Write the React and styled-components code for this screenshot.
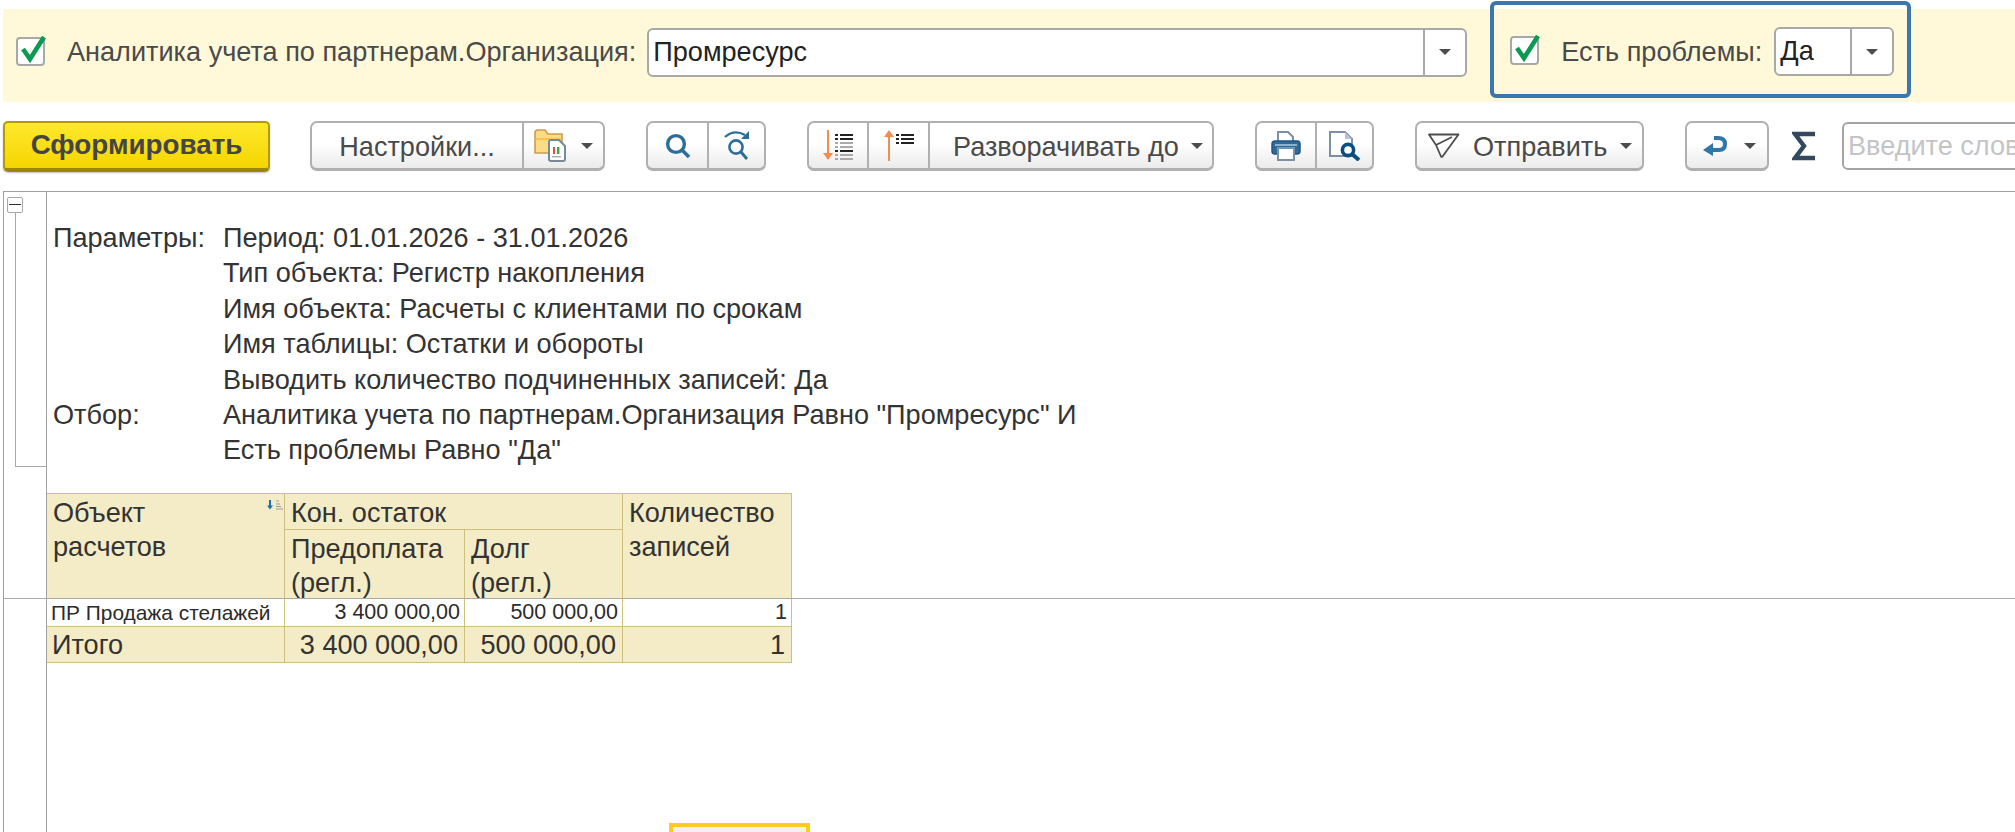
import React from "react";
import styled, { createGlobalStyle } from "styled-components";

const GlobalStyle = createGlobalStyle`
  html, body {
    margin: 0;
    padding: 0;
    background: #ffffff;
    overflow: hidden;
  }
  * {
    box-sizing: border-box;
  }
`;

const Check = () => (
  <CheckSvg viewBox="0 0 30 32">
    <path d="M5 15 L12 25 L26 3" fill="none" stroke="#0b9a50" strokeWidth="4.6" strokeLinejoin="miter" />
  </CheckSvg>
);

const FolderIcon = () => (
  <svg width="32" height="33" viewBox="0 0 32 33">
    <path d="M1 8 L1 4 Q1 1 4 1 L11 1 L14 5 L28 5 L28 24 L1 24 Z" fill="#fbdc85" stroke="#cf9a4d" strokeWidth="1.6" />
    <rect x="1.5" y="9" width="26" height="2" fill="#f2c160" />
    <path d="M15 13 Q15 11 17 11 L25 11 L31 17 L31 30 Q31 32 29 32 L17 32 Q15 32 15 30 Z" fill="#ffffff" stroke="#76899a" strokeWidth="2" />
    <rect x="19" y="18" width="2" height="7" fill="#e0503c" />
    <rect x="23" y="18" width="2.4" height="7" fill="#38a84e" />
    <rect x="18" y="27" width="9" height="1.4" fill="#a9a9a9" />
  </svg>
);

const SearchIcon = () => (
  <svg width="26" height="26" viewBox="0 0 26 26">
    <circle cx="11" cy="11" r="8.4" fill="none" stroke="#2c6e99" strokeWidth="3.4" />
    <path d="M17 17 L24 24" stroke="#2c6e99" strokeWidth="3.6" />
  </svg>
);

const SearchAgainIcon = () => (
  <svg width="26" height="32" viewBox="0 0 26 32">
    <circle cx="12" cy="17" r="6.6" fill="none" stroke="#2c6e99" strokeWidth="2.6" />
    <path d="M17 22 L23 29" stroke="#2c6e99" strokeWidth="3" />
    <path d="M1 7 Q10 -1 21 5" fill="none" stroke="#2c6e99" strokeWidth="2.2" />
    <path d="M25 1 L25 9 L17 9 Z" fill="#2c6e99" />
  </svg>
);

const ListBars = ({ rows }) => (
  <g>
    {rows.map((r) => (
      <g key={r.y} fill={r.color}>
        <rect x="0" y={r.y} width="3" height="2" />
        <rect x="5" y={r.y} width="13" height="2" />
      </g>
    ))}
  </g>
);

const SortDownIcon = () => (
  <svg width="30" height="32" viewBox="0 0 30 32">
    <path d="M5 0 L5 24" stroke="#f58b4e" strokeWidth="2" />
    <path d="M0 23 L10 23 L5 30 Z" fill="#f58b4e" />
    <g transform="translate(12 4)">
      <ListBars
        rows={[
          { y: 0, color: "#222" },
          { y: 4, color: "#222" },
          { y: 8, color: "#aaa" },
          { y: 12, color: "#aaa" },
          { y: 16, color: "#222" },
          { y: 20, color: "#aaa" },
          { y: 24, color: "#aaa" },
        ]}
      />
    </g>
  </svg>
);

const SortUpIcon = () => (
  <svg width="30" height="32" viewBox="0 0 30 32">
    <path d="M5 6 L5 31" stroke="#f58b4e" strokeWidth="2" />
    <path d="M0 7 L10 7 L5 0 Z" fill="#f58b4e" />
    <g transform="translate(12 4)">
      <ListBars
        rows={[
          { y: 0, color: "#222" },
          { y: 4, color: "#222" },
          { y: 8, color: "#222" },
        ]}
      />
    </g>
  </svg>
);

const PrintIcon = () => (
  <svg width="30" height="30" viewBox="0 0 30 30">
    <path d="M7 10 L7 1 L17 1 L22 6 L22 10" fill="#ffffff" stroke="#7c90a6" strokeWidth="2" />
    <rect x="1" y="10" width="28" height="13" rx="3" fill="#2f6a98" stroke="#1f5584" strokeWidth="1.5" />
    <rect x="4" y="13" width="22" height="2" fill="#8fb2cc" />
    <rect x="7" y="17" width="16" height="12" fill="#ffffff" stroke="#7c90a6" strokeWidth="2" />
  </svg>
);

const PreviewIcon = () => (
  <svg width="32" height="30" viewBox="0 0 32 30">
    <path d="M1 1 L16 1 L23 8 L23 25 L1 25 Z" fill="#ffffff" stroke="#7c90a6" strokeWidth="2" />
    <path d="M16 1 L16 8 L23 8 Z" fill="#b9c4d0" />
    <circle cx="19" cy="19" r="5.6" fill="#ffffff" stroke="#0b4f80" strokeWidth="3.6" />
    <path d="M23 23 L30 29" stroke="#0b4f80" strokeWidth="4" />
  </svg>
);

const SendIcon = () => (
  <svg width="32" height="26" viewBox="0 0 32 26">
    <path
      d="M1 1.5 L30.5 1.5 L14.5 23.5 Q13.5 24.5 12.8 23 L8 12 Z M8 12 L24 4"
      fill="none"
      stroke="#4d4d4d"
      strokeWidth="1.8"
      strokeLinejoin="round"
    />
  </svg>
);

const ReturnIcon = () => (
  <svg width="26" height="22" viewBox="0 0 26 22">
    <path d="M0 15 L10 8 L10 21 Z" fill="#2f76a9" />
    <path d="M8 15 L16 15 Q22 15 22 9 Q22 3 15 3 L11 3" fill="none" stroke="#2f76a9" strokeWidth="4" />
  </svg>
);

const SigmaIcon = () => (
  <svg width="24" height="30" viewBox="0 0 24 30">
    <path d="M23 3 L3 3 L12 15 L3 27 L23 27" fill="none" stroke="#34495e" strokeWidth="4.4" />
  </svg>
);

const SortMark = () => (
  <SortMarkSvg viewBox="0 0 16 10">
    <path d="M3 0 L3 6" stroke="#1d6fb8" strokeWidth="2" />
    <path d="M0 5.5 L6 5.5 L3 9.5 Z" fill="#1d6fb8" />
    <path d="M9 1 L12 1 M9 4 L13 4 M9 6.5 L14 6.5 M9 9 L16 9" stroke="#999" strokeWidth="1" />
  </SortMarkSvg>
);

function App() {
  return (
    <Page>
      <GlobalStyle />

      <FilterBar>
        <FilterItem>
          <CheckBox>
            <Check />
          </CheckBox>
          <FilterLabel $space={11}>Аналитика учета по партнерам.Организация:</FilterLabel>
          <Select $width={820}>
            <SelectValue>Промресурс</SelectValue>
            <SelectArrow>
              <Caret />
            </SelectArrow>
          </Select>
        </FilterItem>
        <Highlight>
          <CheckBox>
            <Check />
          </CheckBox>
          <FilterLabel $space={12}>Есть проблемы:</FilterLabel>
          <Select $width={120}>
            <SelectValue>Да</SelectValue>
            <SelectArrow>
              <Caret />
            </SelectArrow>
          </Select>
        </Highlight>
      </FilterBar>

      <Toolbar>
        <PrimaryButton>Сформировать</PrimaryButton>

        <ButtonGroup>
          <ToolButton $width={210}>
            <ButtonText>Настройки...</ButtonText>
          </ToolButton>
          <ToolButton $width={81} $gap={15} $pad={10}>
            <FolderIcon />
            <Caret />
          </ToolButton>
        </ButtonGroup>

        <ButtonGroup>
          <ToolButton $width={59}>
            <SearchIcon />
          </ToolButton>
          <ToolButton $width={57}>
            <SearchAgainIcon />
          </ToolButton>
        </ButtonGroup>

        <ButtonGroup>
          <ToolButton $width={58}>
            <SortDownIcon />
          </ToolButton>
          <ToolButton $width={61}>
            <SortUpIcon />
          </ToolButton>
          <ToolButton $width={284} $gap={12} $pad={23}>
            <ButtonText>Разворачивать до</ButtonText>
            <Caret />
          </ToolButton>
        </ButtonGroup>

        <ButtonGroup>
          <ToolButton $width={58}>
            <PrintIcon />
          </ToolButton>
          <ToolButton $width={57}>
            <PreviewIcon />
          </ToolButton>
        </ButtonGroup>

        <ButtonGroup>
          <ToolButton $width={225} $gap={13} $pad={11}>
            <SendIcon />
            <ButtonText>Отправить</ButtonText>
            <Caret />
          </ToolButton>
        </ButtonGroup>

        <ButtonGroup>
          <ToolButton $width={80} $gap={15} $pad={16}>
            <ReturnIcon />
            <Caret />
          </ToolButton>
        </ButtonGroup>

        <SearchBox>
          <SigmaIcon />
          <SearchInput placeholder="Введите слово для поиска" readOnly />
        </SearchBox>
      </Toolbar>

      <Report>
        <HeadSection>
          <Gutter>
            <GroupToggle />
            <GroupLine />
          </Gutter>
          <HeadContent>
            <Params>
              <span>Параметры:</span>
              <span>Период: 01.01.2026 - 31.01.2026</span>
              <span />
              <span>Тип объекта: Регистр накопления</span>
              <span />
              <span>Имя объекта: Расчеты с клиентами по срокам</span>
              <span />
              <span>Имя таблицы: Остатки и обороты</span>
              <span />
              <span>Выводить количество подчиненных записей: Да</span>
              <span>Отбор:</span>
              <span>Аналитика учета по партнерам.Организация Равно "Промресурс" И</span>
              <span />
              <span>Есть проблемы Равно "Да"</span>
            </Params>
            <HeadGrid>
              <HeadCell $rows={2}>
                Объект
                <br />
                расчетов
                <SortMark />
              </HeadCell>
              <HeadCell $cols={2}>Кон. остаток</HeadCell>
              <HeadCell $rows={2}>
                Количество
                <br />
                записей
              </HeadCell>
              <HeadCell>
                Предоплата
                <br />
                (регл.)
              </HeadCell>
              <HeadCell>
                Долг
                <br />
                (регл.)
              </HeadCell>
            </HeadGrid>
          </HeadContent>
        </HeadSection>

        <BodySection>
          <Gutter />
          <div>
            <BodyGrid>
              <DataCell>ПР Продажа стелажей</DataCell>
              <DataCell $num>3 400 000,00</DataCell>
              <DataCell $num>500 000,00</DataCell>
              <DataCell $num>1</DataCell>
              <TotalCell>Итого</TotalCell>
              <TotalCell $num>3 400 000,00</TotalCell>
              <TotalCell $num>500 000,00</TotalCell>
              <TotalCell $num>1</TotalCell>
            </BodyGrid>
            <CurrentFrame>
              <CurrentInner />
            </CurrentFrame>
          </div>
        </BodySection>
      </Report>
    </Page>
  );
}

const Page = styled.div`
  width: 2015px;
  height: 832px;
  overflow: hidden;
  font-family: "Liberation Sans", Arial, sans-serif;
  font-size: 27.1px;
  color: #333333;
`;

// Filter bar
const FilterBar = styled.div`
  display: flex;
  align-items: flex-start;
  height: 93px;
  margin: 9px 0 0 3px;
  padding-left: 13px;
  background: #fff9d9;
`;

const FilterItem = styled.div`
  display: flex;
  align-items: center;
  height: 86px;
`;

const Highlight = styled.div`
  display: flex;
  align-items: center;
  height: 97px;
  margin: -8px 0 0 23px;
  padding: 4px 13px 0 16px;
  border: 4px solid #3a76af;
  border-radius: 6px;
`;

const CheckBox = styled.div`
  position: relative;
  flex: none;
  width: 29px;
  height: 29px;
  margin: -2px 22px 0 0;
  background: #ffffff;
  border: 2px solid #a8a8a8;
  border-radius: 4px;
`;

const CheckSvg = styled.svg`
  position: absolute;
  left: 0;
  top: -5px;
  width: 30px;
  height: 32px;
`;

const FilterLabel = styled.span`
  margin-right: ${(p) => p.$space}px;
  white-space: nowrap;
  color: #4a4a4a;
`;

const Select = styled.div`
  display: flex;
  width: ${(p) => p.$width}px;
  height: 49px;
  background: #ffffff;
  border: 2px solid #a8a8a8;
  border-radius: 6px;
`;

const SelectValue = styled.div`
  flex: 1;
  padding-left: 4px;
  line-height: 44px;
  color: #222222;
`;

const SelectArrow = styled.div`
  display: flex;
  align-items: center;
  justify-content: center;
  width: 42px;
  border-left: 2px solid #a8a8a8;
`;

const Caret = styled.span`
  flex: none;
  width: 0;
  height: 0;
  border-left: 6px solid transparent;
  border-right: 6px solid transparent;
  border-top: 6px solid #4d4d4d;
`;

// Toolbar
const Toolbar = styled.div`
  display: flex;
  align-items: flex-start;
  gap: 41px;
  height: 51px;
  margin: 19px 0 0 3px;
`;

const PrimaryButton = styled.div`
  flex: none;
  width: 267px;
  height: 51px;
  margin-right: -1px;
  line-height: 44px;
  text-align: center;
  font-size: 27.8px;
  font-weight: 700;
  color: #454545;
  background: linear-gradient(#ffe92e, #f5d500);
  border: 2px solid #b39c00;
  border-bottom: 4px solid #9c8800;
  border-radius: 5px;
  box-shadow: 0 1px 2px rgba(0, 0, 0, 0.25);
`;

const ButtonGroup = styled.div`
  display: flex;
  flex: none;
  height: 50px;
  background: linear-gradient(#ffffff 45%, #ebebeb);
  border: 2px solid #b0b0b0;
  border-bottom-width: 3px;
  border-radius: 7px;
`;

const ToolButton = styled.div`
  display: flex;
  align-items: center;
  justify-content: ${(p) => (p.$pad ? "flex-start" : "center")};
  gap: ${(p) => p.$gap || 0}px;
  width: ${(p) => p.$width}px;
  padding-left: ${(p) => p.$pad || 0}px;
  color: #4a4a4a;
  white-space: nowrap;

  & + & {
    border-left: 2px solid #b0b0b0;
  }
`;

const ButtonText = styled.span`
  margin-top: 3px;
`;

const SearchBox = styled.div`
  display: flex;
  align-items: center;
  flex: none;
  gap: 26px;
  height: 49px;
  margin-left: -18px;
`;

const SearchInput = styled.input`
  width: 420px;
  height: 48px;
  padding: 0 4px;
  font: inherit;
  background: #ffffff;
  border: 2px solid #a5a5a5;
  border-radius: 6px;
  outline: none;

  &::placeholder {
    color: #c4c4c4;
    opacity: 1;
  }
`;

// Report
const Report = styled.div`
  margin: 19px 0 0 3px;
  border-top: 1px solid #a0a0a0;
  border-left: 1px solid #a0a0a0;
`;

const HeadSection = styled.div`
  display: flex;
  height: 407px;
  border-bottom: 1px solid #a8a8a8;
`;

const BodySection = styled.div`
  display: flex;
  height: 241px;
`;

const Gutter = styled.div`
  flex: none;
  width: 43px;
  padding: 5px 0 0 3px;
  border-right: 1px solid #a0a0a0;
`;

const GroupToggle = styled.div`
  position: relative;
  width: 16px;
  height: 16px;
  background: #ffffff;
  border: 1px solid #a8a8a8;
  border-radius: 2px;

  &::after {
    content: "";
    position: absolute;
    left: 1px;
    right: 1px;
    top: 6px;
    height: 1px;
    background: #333333;
  }
`;

const GroupLine = styled.div`
  width: 31px;
  height: 254px;
  margin-left: 8px;
  border-left: 1px solid #a8a8a8;
  border-bottom: 1px solid #a8a8a8;
`;

const HeadContent = styled.div`
  display: flex;
  flex-direction: column;
  align-items: flex-start;
  justify-content: space-between;
  padding-top: 28px;
`;

const Params = styled.div`
  display: grid;
  grid-template-columns: 170px 1fr;
  padding-left: 6px;
  line-height: 35.4px;
  white-space: nowrap;
`;

const HeadGrid = styled.div`
  display: grid;
  grid-template-columns: 238px 180px 158px 169px;
  grid-template-rows: 36px 68px;
  background: #f3ecc6;
  border-top: 1px solid #cdbf7e;
`;

const HeadCell = styled.div`
  position: relative;
  grid-row: span ${(p) => p.$rows || 1};
  grid-column: span ${(p) => p.$cols || 1};
  padding: 2px 0 0 6px;
  line-height: 34px;
  white-space: nowrap;
  border-right: 1px solid #cdbf7e;
  border-bottom: 1px solid #cdbf7e;

  &:nth-child(1),
  &:nth-child(3),
  &:nth-child(4),
  &:nth-child(5) {
    border-bottom: none;
  }
`;

const SortMarkSvg = styled.svg`
  position: absolute;
  right: 1px;
  top: 6px;
  width: 16px;
  height: 10px;
`;

const BodyGrid = styled.div`
  display: grid;
  grid-template-columns: 238px 180px 158px 169px;
  grid-template-rows: 28px 36px;
`;

const DataCell = styled.div`
  padding: ${(p) => (p.$num ? "0 4px 0 0" : "0 0 0 4px")};
  font-size: ${(p) => (p.$num ? "21.5px" : "20.9px")};
  line-height: 27px;
  text-align: ${(p) => (p.$num ? "right" : "left")};
  white-space: nowrap;
  color: #2b2b2b;
  background: #ffffff;
  border-right: 1px solid #cdbf7e;
  border-bottom: 1px solid #cdbf7e;
`;

const TotalCell = styled.div`
  padding: ${(p) => (p.$num ? "0 6px 0 0" : "0 0 0 5px")};
  line-height: 35px;
  text-align: ${(p) => (p.$num ? "right" : "left")};
  white-space: nowrap;
  background: #f3ecc6;
  border-right: 1px solid #cdbf7e;
  border-bottom: 1px solid #cdbf7e;
`;

const CurrentFrame = styled.div`
  width: 141px;
  height: 40px;
  margin: 160px 0 0 622px;
  background: #ffffff;
  border: 4px solid #fccb1f;
`;

const CurrentInner = styled.div`
  height: 100%;
  background: #f1f1f1;
`;

export default App;
